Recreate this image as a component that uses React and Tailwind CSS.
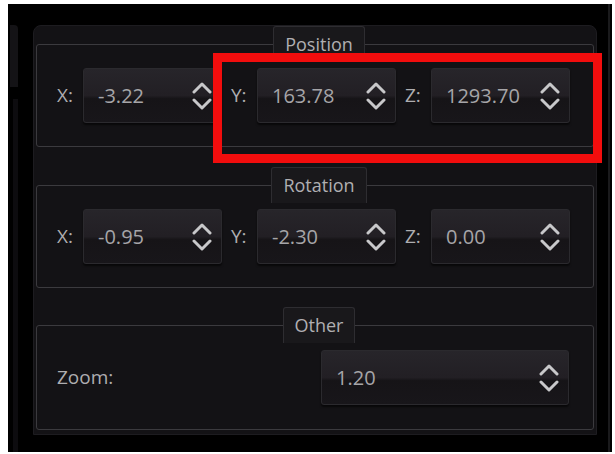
import React from "react";

const font = { fontFamily: '"Open Sans", "Noto Sans", sans-serif' };

function Chevrons() {
  return (
    <svg width="20" height="32" viewBox="0 0 20 32" fill="none">
      <polyline
        points="2,12 10,4 18,12"
        stroke="#c8c8ca"
        strokeWidth="3"
        strokeLinecap="round"
        strokeLinejoin="round"
      />
      <polyline
        points="2,20 10,28 18,20"
        stroke="#c8c8ca"
        strokeWidth="3"
        strokeLinecap="round"
        strokeLinejoin="round"
      />
    </svg>
  );
}

function SpinBox({ value, width = "w-[139px]" }) {
  return (
    <div
      className={`${width} h-[55px] shrink-0 flex items-center justify-between pl-[14px] pr-[9px] rounded-[3px] border border-[#2b2a2e] bg-[linear-gradient(180deg,#27252a_0%,#221f24_50%,#161417_56%,#18161a_100%)] shadow-[0_2px_2px_rgba(0,0,0,0.6)]`}
    >
      <span className="text-[20px] leading-none text-[#a6a5a8]">{value}</span>
      <Chevrons />
    </div>
  );
}

function Field({ label, value }) {
  return (
    <div className="flex items-center">
      <span className="w-[26px] text-[19px] leading-none font-medium text-[#aeadb0]">{label}</span>
      <SpinBox value={value} />
    </div>
  );
}

function GroupBox({ title, height, children }) {
  return (
    <div
      className={`relative ${height} shrink-0 flex items-center pl-[20px] pr-[24px] rounded-[3px] border border-[#3b3a3e]`}
    >
      <div className="absolute inset-x-0 top-[-19px] flex justify-center pl-[8px]">
        <div className="h-[36px] px-[11px] pt-[5px] rounded-t-[3px] border border-b-0 border-[#2e2d31] bg-[#19181b] text-[18px] leading-[24px] font-medium text-[#b0afb2]">
          {title}
        </div>
      </div>
      {children}
    </div>
  );
}

export default function App() {
  return (
    <div
      className="relative w-[615px] h-[454px] bg-white pt-[4px] pl-[8px] pr-[3px] pb-[2px]"
      style={font}
    >
      <div className="flex h-full bg-black">
        {/* side dock edge */}
        <div className="w-[25px] shrink-0 flex flex-col pt-[21px]">
          <div className="ml-[2px] w-[8px] h-[62px] rounded-tr-[4px] bg-[#141316]" />
          <div className="ml-[5px] mt-[12px] w-[5px] flex-1 bg-[#0d0c0f]" />
        </div>

        {/* properties panel */}
        <div className="w-[564px] h-[410px] mt-[21px] shrink-0 flex flex-col gap-[38px] px-[2px] pt-[18px] rounded-t-[8px] border border-[#1d1c20] bg-[#131215]">
          <GroupBox title="Position" height="h-[103px]">
            <div className="flex gap-[9px]">
              <Field label="X:" value="-3.22" />
              <Field label="Y:" value="163.78" />
              <Field label="Z:" value="1293.70" />
            </div>
          </GroupBox>
          <GroupBox title="Rotation" height="h-[103px]">
            <div className="flex gap-[9px]">
              <Field label="X:" value="-0.95" />
              <Field label="Y:" value="-2.30" />
              <Field label="Z:" value="0.00" />
            </div>
          </GroupBox>
          <GroupBox title="Other" height="h-[105px] -mt-[1px]">
            <div className="flex flex-1 items-center">
              <span className="flex-1 text-[19px] leading-none font-medium text-[#aeadb0]">Zoom:</span>
              <SpinBox value="1.20" width="w-[248px]" />
            </div>
          </GroupBox>
        </div>

        <div className="flex-1 flex justify-end pr-[2px]">
          <div className="w-[2px] h-full bg-[#1a1a1c]" />
        </div>
      </div>

      {/* highlight frame */}
      <div className="absolute left-[213px] top-[53px] w-[389px] h-[110px] border-[9px] border-[#f20d0d]" />
    </div>
  );
}
